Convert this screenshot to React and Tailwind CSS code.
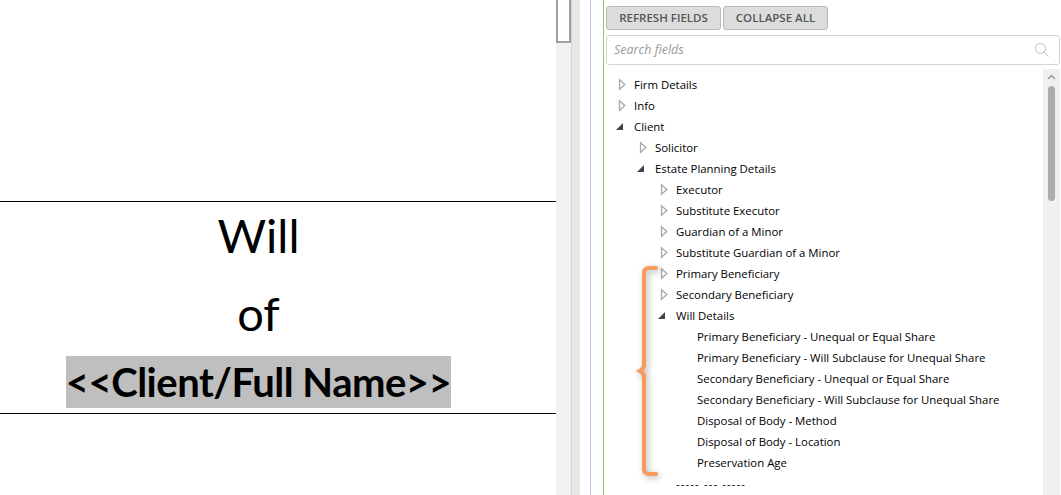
import React from "react";

const rows = [
  ["Firm Details", 0, "c"],
  ["Info", 0, "c"],
  ["Client", 0, "o"],
  ["Solicitor", 1, "c"],
  ["Estate Planning Details", 1, "o"],
  ["Executor", 2, "c"],
  ["Substitute Executor", 2, "c"],
  ["Guardian of a Minor", 2, "c"],
  ["Substitute Guardian of a Minor", 2, "c"],
  ["Primary Beneficiary", 2, "c"],
  ["Secondary Beneficiary", 2, "c"],
  ["Will Details", 2, "o"],
  ["Primary Beneficiary - Unequal or Equal Share", 3, ""],
  ["Primary Beneficiary - Will Subclause for Unequal Share", 3, ""],
  ["Secondary Beneficiary - Unequal or Equal Share", 3, ""],
  ["Secondary Beneficiary - Will Subclause for Unequal Share", 3, ""],
  ["Disposal of Body - Method", 3, ""],
  ["Disposal of Body - Location", 3, ""],
  ["Preservation Age", 3, ""],
  ["----- --- -----", 2, "", true],
];

const indent = ["pl-0", "pl-[21px]", "pl-[42px]", "pl-[63px]"];

function Arrow({ kind }) {
  if (kind === "c")
    return (
      <svg width="8" height="11" viewBox="0 0 8 11" className="shrink-0 overflow-visible">
        <path d="M1.5 0.8 L6.8 5.5 L1.5 10.2 Z" fill="#fff" stroke="#a8a8a8" strokeWidth="1.3" />
      </svg>
    );
  if (kind === "o")
    return (
      <svg width="8" height="11" viewBox="0 0 8 11" className="shrink-0 overflow-visible">
        <path d="M-2 9 L5 9 L5 2 Z" fill="#444" />
      </svg>
    );
  return <span className="w-2 shrink-0" />;
}

export default function App() {
  return (
    <div className="flex h-[495px] w-[1061px] overflow-hidden bg-white">
      <div className="w-[556px] shrink-0 pt-[201px] font-['Lato','Liberation_Sans',sans-serif] text-black">
        <div className="flex h-[213px] flex-col items-center border-y border-black pr-[39px]">
          <div className="mt-[3px] h-[60px] text-[47px] leading-[60px]">Will</div>
          <div className="mt-[18px] h-[60px] text-[47px] leading-[60px]">of</div>
          <div className="mt-[13px] flex h-[52px] w-[385px] items-center justify-center whitespace-nowrap bg-[#bfbfbf] text-[40px] font-bold leading-[52px] tracking-[-0.5px]">
            &lt;&lt;Client/Full Name&gt;&gt;
          </div>
        </div>
      </div>

      <div className="h-full w-[16px] shrink-0 border-r border-[#d4d4d4] bg-[#f1f1f1]">
        <div className="h-[43px] w-[15px] border-x-2 border-b-2 border-[#a0a0a0] bg-white" />
      </div>
      <div className="h-full w-[8px] shrink-0 bg-[#e7e7e7]" />
      <div className="h-full w-[11px] shrink-0 border-r border-[#b4c7e7] bg-white" />
      <div className="h-full w-[13px] shrink-0 border-r border-[#8fc77a] bg-white" />

      <div className="flex min-w-0 flex-1 flex-col pt-[6px] pl-[2px] font-['Open_Sans','Noto_Sans',sans-serif]">
        <div className="flex gap-[2px]">
          <button className="h-6 w-[115px] rounded-[3px] border border-[#b8b8b8] bg-[#dcdcdc] text-[11.5px] font-semibold text-[#555]">
            REFRESH FIELDS
          </button>
          <button className="h-6 w-[105px] rounded-[3px] border border-[#b8b8b8] bg-[#dcdcdc] text-[11.5px] font-semibold text-[#555]">
            COLLAPSE ALL
          </button>
        </div>
        <div className="mt-[5px] flex h-[30px] w-[454px] items-center justify-between rounded-[3px] border border-[#d4d4d4] pl-[7px] pr-[10px]">
          <span className="pt-px text-[12.5px] italic text-[#999]">Search fields</span>
          <svg width="14" height="14" viewBox="0 0 14 14" fill="none" stroke="#bbb" strokeWidth="1">
            <circle cx="5.5" cy="5.500" r="5" />
            <path d="M9 9 L13.500 13.500" />
          </svg>
        </div>

        <div className="mt-[4px] flex min-h-0 flex-1">
          <div className="min-w-0 flex-1 pt-[5px] pl-[12px]">
            <div className="relative">
              {rows.map(([label, level, kind, dash]) => (
                <div key={label} className={`flex h-[21px] items-center ${indent[level]}`}>
                  <Arrow kind={kind} />
                  <span className={`ml-[8px] whitespace-nowrap text-[11.4px] leading-[21px] ${dash ? "tracking-[1.1px] text-black" : "text-black"}`}>
                    {label}
                  </span>
                </div>
              ))}
              <svg
                width="26"
                height="214"
                viewBox="0 0 26 214"
                fill="none"
                className="absolute left-[15px] top-[192px] drop-shadow-[2px_2px_3px_rgba(0,0,0,0.3)]"
              >
                <path
                  d="M23 2 H16 Q11 2 11 7 V99 Q11 103 7 105 Q11 107 11 111 V203 Q11 208 16 208 H23"
                  stroke="#f79a5a"
                  strokeWidth="4"
                  strokeLinecap="round"
                />
              </svg>
            </div>
          </div>
          <div className="mr-px h-full w-[17px] shrink-0 bg-[#f0f0f0] pt-[4px]">
            <svg width="17" height="8" viewBox="0 0 17 8" fill="none" stroke="#999" strokeWidth="1.5" className="block">
              <path d="M5 6 L8.500 2.500 L12 6" />
            </svg>
            <div className="ml-[5px] mt-[5px] h-[115px] w-[7px] rounded-[4px] bg-[#acacac]" />
          </div>
        </div>
      </div>
    </div>
  );
}
